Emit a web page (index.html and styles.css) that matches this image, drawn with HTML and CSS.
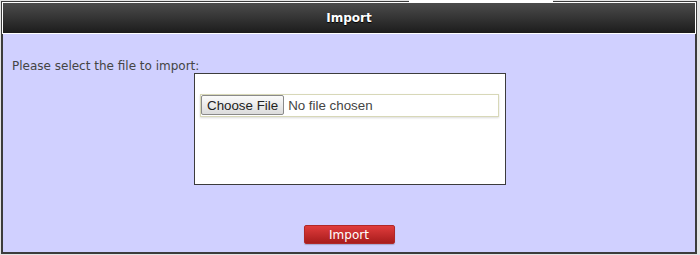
FILE: index.html
```html
<!DOCTYPE html>
<html lang="en">

<head>
    <meta charset="UTF-8">
    <meta name="viewport" content="width=device-width, initial-scale=1.0">
    <title>Import</title>
    <link rel="stylesheet" href="styles.css">
</head>

<body>

    <div class="tab"></div>

    <div class="dialog">
        <div class="dialog-header">Import</div>
        <form class="dialog-body" id="importForm">
            <label class="prompt" for="importFile">Please select the file to import:</label>
            <div class="file-box">
                <input type="file" id="importFile" name="importFile" class="file-input">
            </div>
            <button type="button" class="btn-import">Import</button>
        </form>
    </div>

</body>

</html>
```

FILE: styles.css
```css
body {
    margin: 0;
    background-color: #e4e4e4;
    font-family: "DejaVu Sans", Verdana, sans-serif;
    font-size: 12px;
}

/* white tab peeking above the dialog */
.tab {
    position: absolute;
    top: 0;
    left: 409px;
    width: 144px;
    height: 2px;
    background-color: #fff;
}

.dialog {
    margin: 1px 3px 0 1px;
    border: 1px solid #3c3c3c;
    background-color: #fff;
}

.dialog-header {
    border: 1px solid #fff;
    height: 30px;
    line-height: 30px;
    text-align: center;
    color: #fff;
    font-weight: bold;
    background: linear-gradient(to bottom, #4c4c4c, #1c1c1c);
    text-shadow: 0 1px 1px #000;
}

.dialog-body {
    display: flex;
    flex-direction: column;
    height: 218px;
    margin: 0;
    padding-left: 2px;
    background-color: #d0d0ff;
    border: 1px solid #3c3c3c;
    border-top: 0;
}

.prompt {
    display: block;
    margin: 25px 0 0 7px;
    line-height: 14px;
    color: #444;
}

.file-box {
    width: 305px;
    height: 90px;
    margin: 0 auto;
    padding: 20px 0 0 5px;
    border: 1px solid #3c3c3c;
    background-color: #fff;
}

.file-input {
    width: 299px;
    height: 23px;
    padding: 0;
    border: 1px solid #d8d8b8;
    box-sizing: border-box;
    box-shadow: 0 1px 2px rgba(0, 0, 0, 0.15);
    font-family: "Liberation Sans", Arial, sans-serif;
    font-size: 13.33px;
    color: #444;
}

.file-input::file-selector-button {
    height: 20px;
    margin: 0 4px 1px 0;
    padding: 0 5px;
    border: 1px solid #8a8a8a;
    border-radius: 2px;
    background: linear-gradient(to bottom, #fbfbfb, #dcdcdc);
    color: #222;
    font-family: "Liberation Sans", Arial, sans-serif;
    font-size: 13.33px;
}

.btn-import {
    align-self: center;
    width: 91px;
    height: 19px;
    margin: 40px 2px 0 0;
    padding: 0;
    border: 1px solid #b02828;
    border-radius: 2px;
    background: linear-gradient(to bottom, #e03c3c, #a81c1c);
    box-shadow: 0 1px 1px rgba(0, 0, 0, 0.2);
    color: #fff;
    font-family: "DejaVu Sans", Verdana, sans-serif;
    font-size: 12px;
    line-height: 18px;
    cursor: pointer;
}

.btn-import:hover {
    background: linear-gradient(to bottom, #ea4a4a, #b02424);
}
```
